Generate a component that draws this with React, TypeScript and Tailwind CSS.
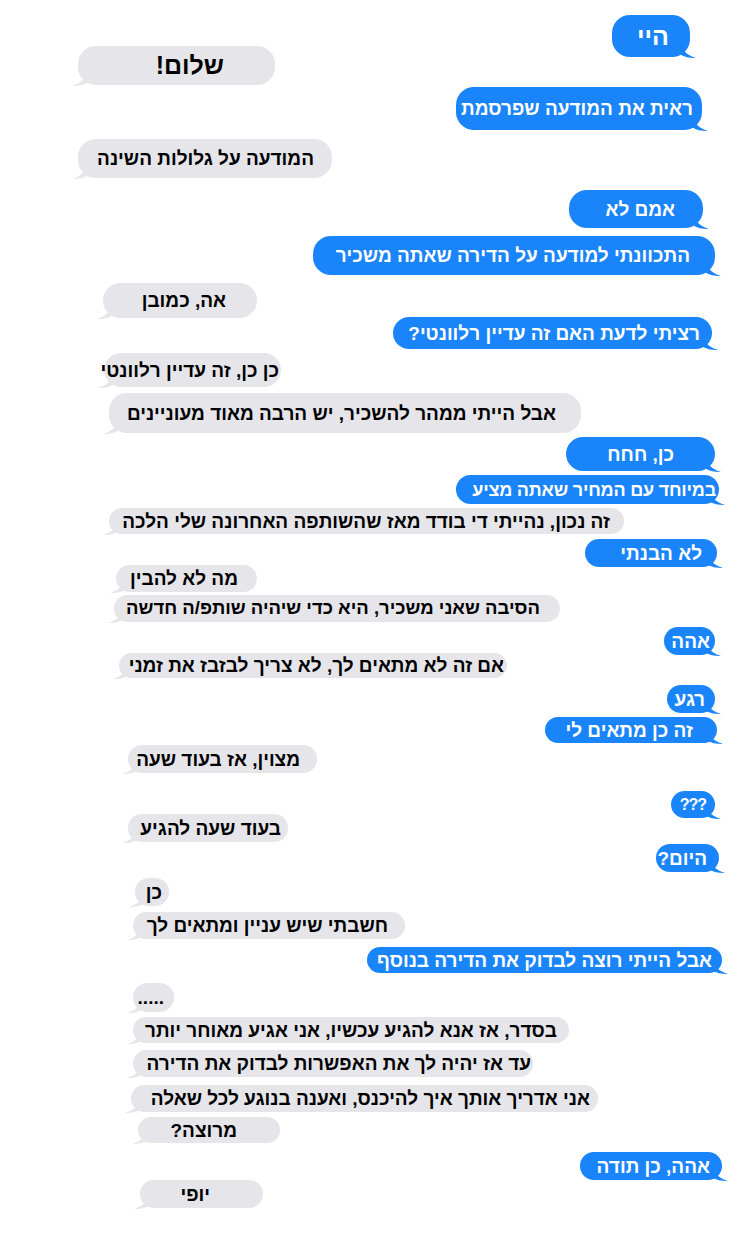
import React from "react";

type Msg = {
  me: boolean;
  text: string;
  box: string; // margin, width, height
  pad: string; // where the text sits
  size?: string;
};

// every bubble of the thread, top to bottom (first two share a row)
const messages: Msg[] = [
  { me: true, text: "ראית את המודעה שפרסמת", box: "mt-[2px] ml-[456px] w-[246px] h-[43px]", pad: "pr-[9px]" },
  { me: false, text: "המודעה על גלולות השינה", box: "mt-[9px] ml-[78px] w-[254px] h-[39px]", pad: "pr-[18px]" },
  { me: true, text: "אמם לא", box: "mt-[12px] ml-[569px] w-[134px] h-[38px]", pad: "pr-[28px]" },
  { me: true, text: "התכוונתי למודעה על הדירה שאתה משכיר", box: "mt-[8px] ml-[313px] w-[402px] h-[39px]", pad: "pr-[25px]" },
  { me: false, text: "אה, כמובן", box: "mt-[8px] ml-[103px] w-[154px] h-[35px]", pad: "pr-[31px]" },
  { me: true, text: "רציתי לדעת האם זה עדיין רלוונטי?", box: "-mt-[1px] ml-[393px] w-[319px] h-[32px]", pad: "pr-[12px]" },
  { me: false, text: "כן כן, זה עדיין רלוונטי", box: "mt-[4px] ml-[104px] w-[177px] h-[34px]", pad: "pr-[2px]" },
  { me: false, text: "אבל הייתי ממהר להשכיר, יש הרבה מאוד מעוניינים", box: "mt-[6px] ml-[109px] w-[472px] h-[40px]", pad: "pr-[25px]" },
  { me: true, text: "כן, חחח", box: "mt-[4px] ml-[566px] w-[149px] h-[34px]", pad: "pr-[41px]" },
  { me: true, text: "במיוחד עם המחיר שאתה מציע", box: "mt-[4px] ml-[456px] w-[263px] h-[29px]", pad: "pr-[3px]", size: "text-[18px] tracking-[-0.2px]" },
  { me: false, text: "זה נכון, נהייתי די בודד מאז שהשותפה האחרונה שלי הלכה", box: "mt-[4px] ml-[109px] w-[515px] h-[26px]", pad: "pr-[14px]" },
  { me: true, text: "לא הבנתי", box: "mt-[5px] ml-[585px] w-[132px] h-[28px]", pad: "pr-[15px]" },
  { me: false, text: "מה לא להבין", box: "-mt-[2px] ml-[116px] w-[141px] h-[27px]", pad: "pr-[19px]" },
  { me: false, text: "הסיבה שאני משכיר, היא כדי שיהיה שותפ/ה חדשה", box: "mt-[3px] ml-[114px] w-[446px] h-[27px]", pad: "pr-[20px]", size: "text-[18.5px]" },
  { me: true, text: "אהה", box: "mt-[5px] ml-[664px] w-[51px] h-[28px]", pad: "pr-[5px]" },
  { me: false, text: "אם זה לא מתאים לך, לא צריך לבזבז את זמני", box: "-mt-[2px] ml-[119px] w-[388px] h-[25px]", pad: "pr-[3px]" },
  { me: true, text: "רגע", box: "mt-[7px] ml-[667px] w-[48px] h-[28px]", pad: "pr-[10px]" },
  { me: true, text: "זה כן מתאים לי", box: "mt-[4px] ml-[545px] w-[172px] h-[26px]", pad: "pr-[24px]" },
  { me: false, text: "מצוין, אז בעוד שעה", box: "mt-[2px] ml-[128px] w-[189px] h-[28px]", pad: "pr-[17px]" },
  { me: true, text: "???", box: "mt-[18px] ml-[671px] w-[44px] h-[27px]", pad: "pr-[9px]", size: "text-[16px] tracking-[-1px]" },
  { me: false, text: "בעוד שעה להגיע", box: "-mt-[4px] ml-[128px] w-[160px] h-[28px]", pad: "pr-[7px]" },
  { me: true, text: "היום?", box: "mt-[2px] ml-[656px] w-[63px] h-[28px]", pad: "pr-[12px]" },
  { me: false, text: "כן", box: "mt-[6px] ml-[135px] w-[34px] h-[28px]", pad: "pr-[7px]" },
  { me: false, text: "חשבתי שיש עניין ומתאים לך", box: "mt-[6px] ml-[133px] w-[272px] h-[27px]", pad: "pr-[17px]" },
  { me: true, text: "אבל הייתי רוצה לבדוק את הדירה בנוסף", box: "mt-[8px] ml-[367px] w-[355px] h-[26px]", pad: "pr-[10px]" },
  { me: false, text: ".....", box: "mt-[10px] ml-[133px] w-[41px] h-[29px]", pad: "pr-[10px]" },
  { me: false, text: "בסדר, אז אנא להגיע עכשיו, אני אגיע מאוחר יותר", box: "mt-[5px] ml-[133px] w-[436px] h-[26px]", pad: "pr-[12px]" },
  { me: false, text: "עד אז יהיה לך את האפשרות לבדוק את הדירה", box: "mt-[7px] ml-[133px] w-[400px] h-[27px]", pad: "pr-[2px]" },
  { me: false, text: "אני אדריך אותך איך להיכנס, ואענה בנוגע לכל שאלה", box: "mt-[8px] ml-[131px] w-[467px] h-[27px]", pad: "pr-[8px]" },
  { me: false, text: "מרוצה?", box: "mt-[5px] ml-[138px] w-[142px] h-[26px]", pad: "pr-[43px]" },
  { me: true, text: "אהה, כן תודה", box: "mt-[9px] ml-[580px] w-[142px] h-[28px]", pad: "pr-[12px]" },
  { me: false, text: "יופי", box: "mt-0 ml-[140px] w-[123px] h-[28px]", pad: "pr-[53px]" },
];

function Tail({ me }: { me: boolean }) {
  if (me) {
    return (
      <svg className="absolute -right-[6px] -bottom-[1px]" width="16" height="16" viewBox="0 0 16 16">
        <path d="M2 0 C2 8 6 13 16 16 C9 16 4 15 0 12 Z" fill="#1a84fb" />
      </svg>
    );
  }
  return (
    <svg className="absolute -left-[6px] -bottom-[1px]" width="16" height="16" viewBox="0 0 16 16">
      <path d="M14 0 C14 8 10 13 0 16 C7 16 12 15 16 12 Z" fill="#e5e5ea" />
    </svg>
  );
}

function Bubble({ m }: { m: Msg }) {
  return (
    <div
      dir="rtl"
      className={`relative flex shrink-0 items-center justify-start rounded-[18px] whitespace-nowrap font-bold ${m.size ?? "text-[19px]"} ${m.me ? "bg-[#1a84fb] text-white" : "bg-[#e5e5ea] text-black"} ${m.box} ${m.pad}`}
    >
      <Tail me={m.me} />
      <span className="relative">{m.text}</span>
    </div>
  );
}

export default function App() {
  return (
    <div className="min-h-[1242px] w-[742px] bg-white pt-[15px] font-['Liberation_Sans',Arial,sans-serif] leading-none">
      <div className="flex h-[70px] items-start">
        <Bubble
          m={{ me: false, text: "שלום!", box: "mt-[31px] ml-[78px] w-[197px] h-[39px]", pad: "pr-[51px]", size: "text-[25px]" }}
        />
        <Bubble
          m={{ me: true, text: "היי", box: "ml-[337px] w-[78px] h-[42px]", pad: "pr-[21px]", size: "text-[25px]" }}
        />
      </div>
      <div className="flex flex-col items-start">
        {messages.map((m, i) => (
          <Bubble key={i} m={m} />
        ))}
      </div>
    </div>
  );
}
